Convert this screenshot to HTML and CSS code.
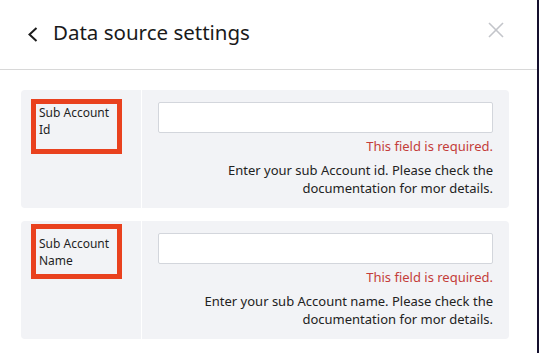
FILE: index.html
```html
<!DOCTYPE html>
<html lang="en">
  <head>
    <meta charset="UTF-8" />
    <meta name="viewport" content="width=device-width, initial-scale=1.0" />
    <title>Data source settings</title>
    <link rel="stylesheet" href="styles.css">
  </head>
  <body>
    <div class="drawer">
      <div class="header">
        <svg class="back" width="10" height="15" viewBox="0 0 10 15">
          <polyline points="8.5,1 1.5,7.5 8.5,14" fill="none" stroke="#1c1c1c" stroke-width="2" />
        </svg>
        <h3>Data source settings</h3>
        <svg class="close" width="16" height="16" viewBox="0 0 16 16">
          <line x1="1" y1="1" x2="15" y2="15" stroke="#c3c5ca" stroke-width="1.6" />
          <line x1="15" y1="1" x2="1" y2="15" stroke="#c3c5ca" stroke-width="1.6" />
        </svg>
      </div>

      <div class="content">
        <div class="field">
          <div class="field-label">Sub Account Id</div>
          <div class="field-body">
            <input type="text" id="subAccountId" />
            <div class="error">This field is required.</div>
            <div class="help">Enter your sub Account id. Please check the documentation for mor details.</div>
          </div>
          <div class="marker marker-first"></div>
        </div>

        <div class="field">
          <div class="field-label">Sub Account Name</div>
          <div class="field-body">
            <input type="text" id="subAccountName" />
            <div class="error">This field is required.</div>
            <div class="help">Enter your sub Account name. Please check the documentation for mor details.</div>
          </div>
          <div class="marker marker-second"></div>
        </div>
      </div>
    </div>
  </body>
</html>
```

FILE: styles.css
```css
body {
  font-family: "Noto Sans", "Open Sans", sans-serif;
  margin: 0;
  background-color: #15102e;
  height: 353px;
  overflow: hidden;
}

.drawer {
  width: 537px;
  height: 353px;
  background-color: white;
}

.header {
  display: flex;
  align-items: center;
  height: 69px;
  padding: 0 33px 0 28px;
  border-bottom: 1px solid #d8d8d8;
}

.back {
  margin-right: 15px;
}

h3 {
  flex: 1;
  margin: 0 0 5px 0;
  font-size: 20.5px;
  line-height: 20px;
  font-weight: normal;
  color: #1a1a1a;
}

.close {
  margin-bottom: 9px;
}

.content {
  display: flex;
  flex-direction: column;
  gap: 13px;
  padding: 20px 28px 0 21px;
}

.field {
  position: relative;
  display: grid;
  grid-template-columns: 120px 1fr;
  background-color: #f2f3f6;
  border-radius: 4px;
}

.field-label {
  padding: 14px 24px 0 18px;
  font-size: 12px;
  line-height: 17px;
  color: #1f1f1f;
}

.field-body {
  border-left: 1px solid white;
  padding: 12px 16px 11px 16px;
}

input {
  display: block;
  width: 100%;
  height: 31px;
  box-sizing: border-box;
  border: 1px solid #d3d6dc;
  border-radius: 2px;
  background: white;
  margin: 0;
}

.error {
  margin-top: 4px;
  text-align: right;
  font-size: 13px;
  line-height: 19px;
  color: #c43d3a;
}

.help {
  margin-top: 5px;
  text-align: right;
  font-size: 13px;
  line-height: 18px;
  color: #222;
}

.marker {
  position: absolute;
  left: 10px;
  width: 81px;
  height: 45px;
  border: 5px solid #e9411e;
}

.marker-first {
  top: 9px;
}

.marker-second {
  top: 3px;
}
```
